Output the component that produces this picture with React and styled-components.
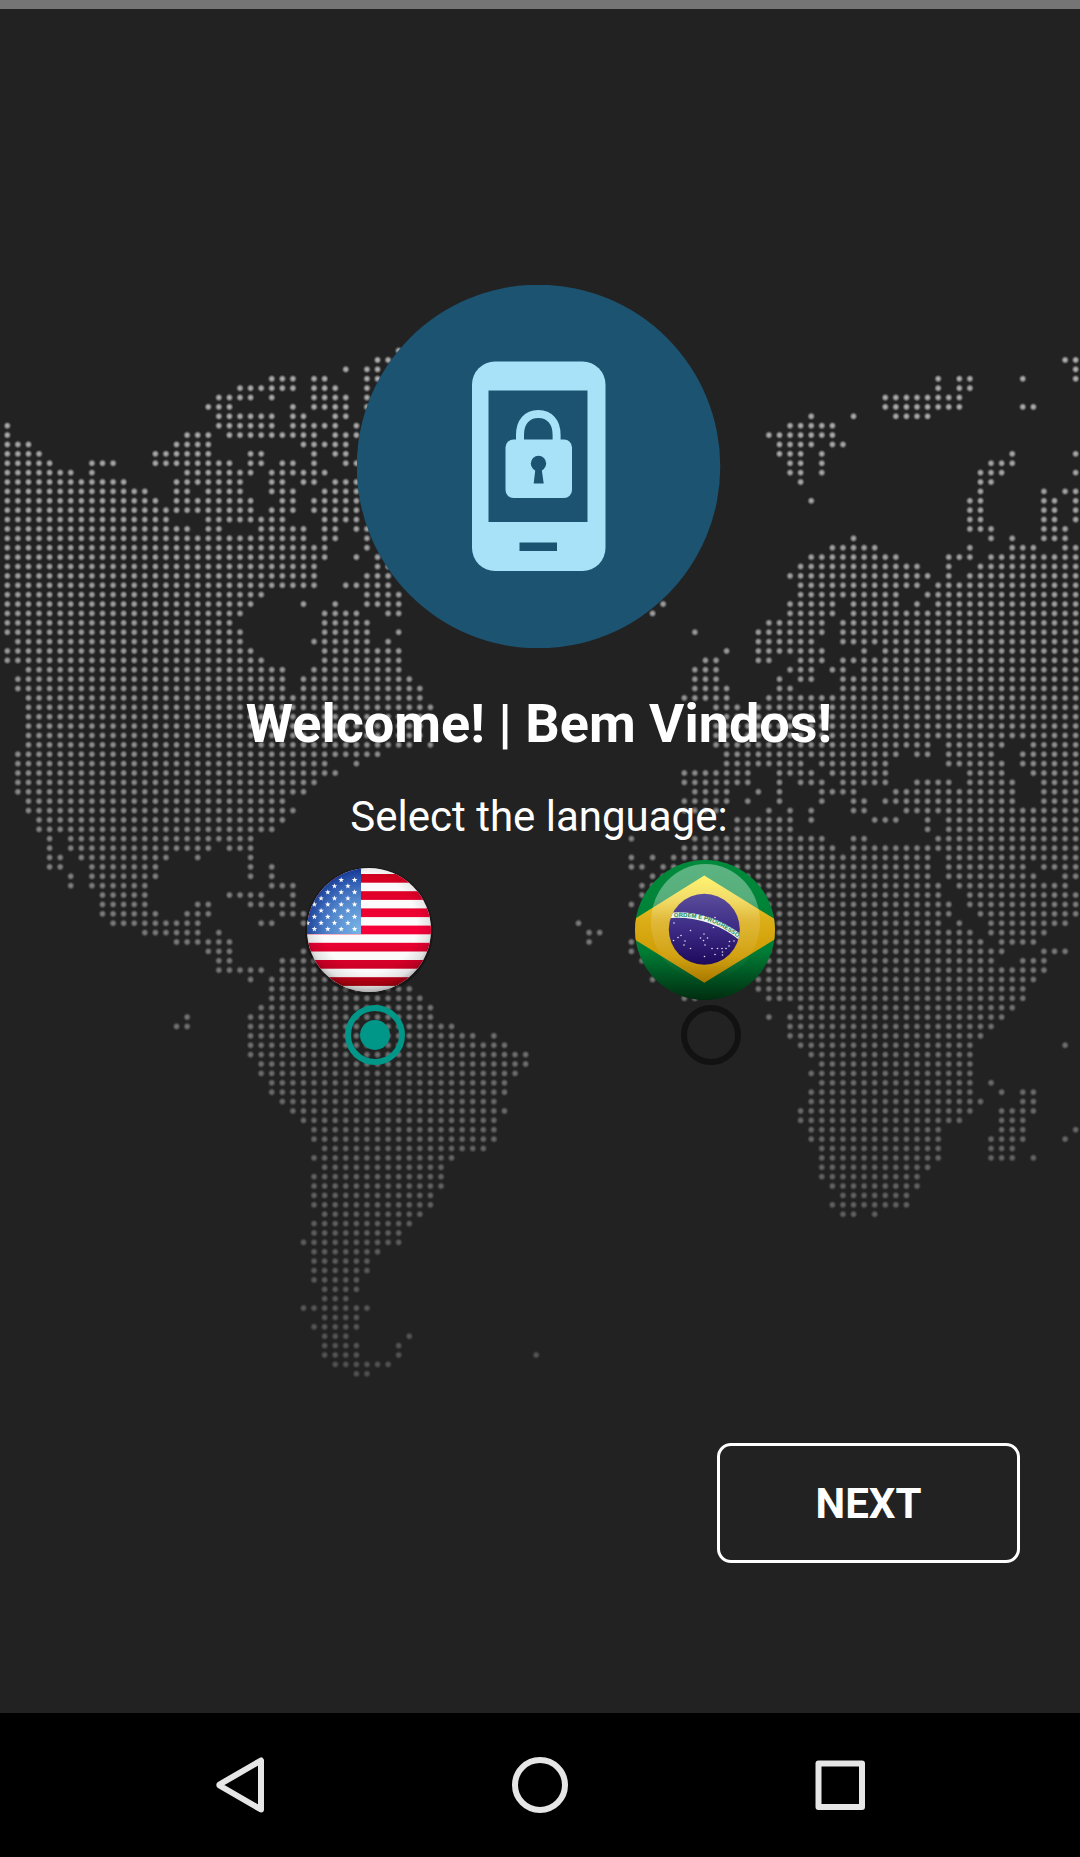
import React, { useState } from "react";
import styled, { createGlobalStyle } from "styled-components";

const GlobalStyle = createGlobalStyle`
  * { box-sizing: border-box; }
  body {
    margin: 0;
    background: #222222;
    color: #ffffff;
    font-family: Roboto, "Noto Sans", sans-serif;
  }
`;

const Screen = styled.div`
  position: relative;
  display: flex;
  flex-direction: column;
  min-height: 100vh;
  overflow: hidden;
  background: #222222;
`;

const StatusBar = styled.div`
  height: 9px;
  background: #757575;
`;

const MapBackdrop = styled.svg`
  position: absolute;
  top: 0;
  left: 0;
  width: 100%;
  height: auto;
`;

const Main = styled.main`
  position: relative;
  flex: 1;
  display: flex;
  flex-direction: column;
  align-items: center;
  padding: 276px 2px 0 0;
`;

const Emblem = styled.svg`
  display: block;
  width: 364px;
  height: 363px;
`;

const Title = styled.h1`
  margin: 44px 0 0;
  font-size: 54px;
  line-height: 64px;
  font-weight: 700;
  text-align: center;
`;

const Prompt = styled.p`
  margin: 36px 0 18px;
  font-size: 42px;
  line-height: 50px;
  text-align: center;
`;

const Languages = styled.div`
  display: flex;
  justify-content: center;
  gap: 196px;
  padding-right: 4px;
`;

const Language = styled.label`
  display: flex;
  flex-direction: column;
  align-items: center;
  gap: 5px;
  width: 140px;
  cursor: pointer;
`;

const FlagArt = styled.svg`
  display: block;
  width: 140px;
  height: 140px;
`;

const Radio = styled.input`
  appearance: none;
  display: grid;
  place-items: center;
  width: 60px;
  height: 60px;
  margin: 0 0 0 12px;
  border: 6px solid #121212;
  border-radius: 50%;

  &:checked { border-color: #009688; }
  &:checked::before {
    content: "";
    width: 30px;
    height: 30px;
    border-radius: 50%;
    background: #009688;
  }
`;

const Actions = styled.footer`
  position: relative;
  display: flex;
  justify-content: flex-end;
  padding: 0 60px 150px;
`;

const NextButton = styled.button`
  width: 303px;
  height: 120px;
  padding: 2px 0 0;
  border: 3px solid #ffffff;
  border-radius: 14px;
  background: transparent;
  color: #ffffff;
  font: 700 42px/50px Roboto, "Noto Sans", sans-serif;
  cursor: pointer;
`;

const NavBar = styled.nav`
  position: relative;
  display: flex;
  justify-content: center;
  gap: 156px;
  height: 144px;
  background: #000000;
`;

const NavButton = styled.button`
  width: 144px;
  height: 144px;
  padding: 0;
  border: 0;
  background: transparent;
  cursor: pointer;

  svg { display: block; fill: none; stroke: #e6e6e6; stroke-width: 6; stroke-linejoin: round; }
`;

/* Land cells of the dotted world map: one line for each row, as column ranges. */
const LAND = `37
35-36 100-101
32 34-35 101
25-27 29-30 34-35 88 90-91 96 101
22-27 29-31 34 88 90-91
20-23 25 29-32 34 83-90
19-21 27 29-32 34 83-90 96-97
20-25 27-28 31-32 76 80 84-87
0 20-25 27-31 33 74-78
0 17-19 21-29 31-33 72-78
0-2 16-19 28-32 73-76 78-79
0-3 14-19 23-24 29 31-32 73-75 77 95 101
0-4 8-10 14-21 23-24 26-27 29 32-33 74-75 77 93-95
0-6 8 17-23 25-30 74-75 77 92-94 101
0-11 16-22 25-26 28-29 31-33 75 92-93
0-13 16-17 19-22 25-27 30-33 92 98 100-101
0-14 16-23 26-27 29-33 76 91-92 98-99 101
0-23 25-27 29-33 91-92 98-99 101
0-15 19-26 30-33 91-92 98-99 101
0-17 19-20 24-28 30-31 33-34 91-93 98-100
0-28 30-31 34 80 93 95 98-100
0-30 34 78-82 91 95-97 100-101
0-30 33 35 76-84 89-91 93-101
0-29 35-36 75-86 89 92-101
0-29 34-36 74-87 89 91-101
0-29 32-36 75-86 88-101
0-24 34-37 75-84 87-101
0-23 28 31 34-37 62 74-78 80-84 86 88-101
0-22 30-33 36-37 61 74-78 80-101
0-21 30-34 72-77 79-101
0-22 30-34 37 65 71-77 79-101
1-22 29-34 36 71-76 79-101
0-23 30-37 68 71-77 81 83-101
0-24 30-37 66-67 71-72 75-77 79-101
2-26 29-37 65-67 74-76 78-79 81-101
1-26 28-38 65-67 73 75-76 79-101
1-26 28-39 65-68 73-74 79-101
2-39 64-68 72-101
2-40 67-69 71-101
2-39 67-101
2-39 67-101
2-39 67-101
2-38 40 67-87 89-94 97-101
1-35 68-84 86-87 89-93 96-101
1-30 33 68-75 77-83 89-94 96-101
1-31 64-70 73-76 78-83 91-94 97-101
1-29 64-70 73 75-77 79-83 86-89 91-95 98-101
1-28 65-68 71 73 77-80 84-95 98-101
2-26 64-68 70 73 77 80-81 83-95 98-101
2-27 64-67 72 74 76 80-81 85-101
3-26 69-74 76 82-84 87 89-101
3-25 69-74 87 89-101
4 6-23 59 65-77 80-81 88-101
4 6-19 21-23 64-78 80-101
4-5 7-15 18 23 59 61 63-87 89-101
4-5 8-14 23 25 59-60 62-87 89-96 98-101
6 8-14 23 25 61-87 89-97 100-101
6 8-13 25-27 60-88 90-100
9-13 21-24 27 60-88 91-101
9-13 18-19 23-27 59 61-89 91-101
9-14 17-19 26-28 62-89 92-101
10-18 24-25 28 54 62-88 90 93-100
13-18 20 55-56 62-91 93-98
16-21 55 59 62-92 94-97
19-21 28 59 62-94 98-100
20-21 26-36 60 62-93 96-98
20-24 26-37 62-98
23 25-37 61 71-97
25-38 71-96
25-39 64-65 72-96
24-40 75-95
17 23-40 72 74-94
16-17 23-42 74-93
23-44 46 74-92
23-47 75-91 100
23-49 76-91
24-49 77-91
24-48 76-91
25-47 77-91 93
25-47 76-91 94 96-97
26-46 76-92 96-97
27-47 75-91 94-97
28-46 75-90 94-96
29-46 76-88 94-96 101
29-46 76-88 93-96 100
30-45 77-88 93-95
29-42 77-88 93-95 97
30-41 77-87
29-41 77-86
29-41 78-86
29-40 79-85
29-40 78-85
30-39 79-80 82
29-38
29-37
28-37
29-35
29-34
29-34
29-33
30-33
30-32
28-34
30-33
29-33
30-32 38
30-33 37
30-33 37 50
31-36
33-34`;

const COL = 10.578;
const ROW = 9.387;
const MAP_LEFT = 2.01;
const MAP_TOP = 345.9;

const landPath = LAND.split("\n")
  .map((line, row) =>
    line
      .split(" ")
      .map((run) => {
        const [from, to = from] = run.split("-").map(Number);
        const x = (MAP_LEFT + from * COL).toFixed(2);
        const y = (MAP_TOP + row * ROW).toFixed(2);
        const w = ((to - from + 1) * COL).toFixed(2);
        return `M${x} ${y}h${w}v${ROW}h-${w}z`;
      })
      .join("")
  )
  .join("");

function WorldMap() {
  return (
    <MapBackdrop viewBox="0 0 1080 1400" aria-hidden="true">
      <defs>
        <radialGradient id="dot">
          <stop offset="0" stopColor="#fff" />
          <stop offset="0.35" stopColor="#fff" stopOpacity="0.9" />
          <stop offset="0.7" stopColor="#fff" stopOpacity="0.4" />
          <stop offset="1" stopColor="#fff" stopOpacity="0" />
        </radialGradient>
        <pattern id="dots" x={MAP_LEFT} y={MAP_TOP} width={COL} height={ROW} patternUnits="userSpaceOnUse">
          <circle cx={COL / 2} cy={ROW / 2} r="4.1" fill="url(#dot)" />
        </pattern>
        <mask id="grid" maskUnits="userSpaceOnUse" x="0" y="0" width="1080" height="1400">
          <rect width="1080" height="1400" fill="url(#dots)" />
        </mask>
        <linearGradient id="shade" gradientUnits="userSpaceOnUse" x1="0" y1="350" x2="0" y2="1380">
          <stop offset="0" stopColor="#b6b6b6" />
          <stop offset="0.25" stopColor="#a4a4a4" />
          <stop offset="0.5" stopColor="#868686" />
          <stop offset="0.75" stopColor="#6c6c6c" />
          <stop offset="1" stopColor="#545454" />
        </linearGradient>
      </defs>
      <path d={landPath} fill="url(#shade)" mask="url(#grid)" />
    </MapBackdrop>
  );
}

function PhoneLock() {
  return (
    <Emblem viewBox="0 0 364 363" aria-hidden="true">
      <circle cx="181.5" cy="181.5" r="181.8" fill="#1b5370" />
      <rect x="115" y="76.5" width="133.5" height="209.5" rx="23" fill="#a8e2f9" />
      <rect x="131.5" y="105.5" width="99" height="131.5" fill="#1b5370" />
      <rect x="162.5" y="257.5" width="37.5" height="8.5" fill="#1b5370" />
      <path d="M163 157v-7c0-13 7-21 18.300-21s18.300 8 18.300 21v7" fill="none" stroke="#a8e2f9" strokeWidth="8" />
      <rect x="148.500" y="154.500" width="66.500" height="58.500" rx="8" fill="#a8e2f9" />
      <circle cx="181.500" cy="178.500" r="7.700" fill="#1b5370" />
      <path d="M178.500 183h6l2.200 15.500h-10z" fill="#1b5370" />
    </Emblem>
  );
}

const starPoints = (cx, cy, r) =>
  Array.from({ length: 10 }, (_, k) => {
    const radius = k % 2 ? r * 0.42 : r;
    const angle = (Math.PI / 5) * k - Math.PI / 2;
    return `${(cx + radius * Math.cos(angle)).toFixed(2)},${(cy + radius * Math.sin(angle)).toFixed(2)}`;
  }).join(" ");

const stars = [];
for (let j = 0; j < 9; j += 1) {
  for (let i = -1; i < 7; i += 1) {
    if ((i + j) % 2 === 0) stars.push([15.4 + 6.7 * i, 20 + 6.13 * j]);
  }
}

function UsaFlag() {
  return (
    <FlagArt viewBox="0 0 140 140" aria-hidden="true">
      <defs>
        <clipPath id="usaRound"><circle cx="70" cy="70" r="62" /></clipPath>
        <linearGradient id="usaRed" x1="0" y1="0" x2="0" y2="140" gradientUnits="userSpaceOnUse">
          <stop offset="0.1" stopColor="#d3001f" />
          <stop offset="0.5" stopColor="#f8003a" />
          <stop offset="0.8" stopColor="#c90022" />
          <stop offset="0.95" stopColor="#a00000" />
        </linearGradient>
        <radialGradient id="usaBlue" cx="62" cy="70" r="62" gradientUnits="userSpaceOnUse">
          <stop offset="0" stopColor="#79b5e8" />
          <stop offset="0.5" stopColor="#5488cd" />
          <stop offset="1" stopColor="#153a9e" />
        </radialGradient>
        <radialGradient id="usaShade" cx="70" cy="64" r="68" gradientUnits="userSpaceOnUse">
          <stop offset="0.7" stopColor="#000" stopOpacity="0" />
          <stop offset="0.9" stopColor="#000" stopOpacity="0.1" />
          <stop offset="1" stopColor="#000" stopOpacity="0.3" />
        </radialGradient>
      </defs>
      <circle cx="70" cy="71" r="64" fill="#000" opacity="0.3" />
      <g clipPath="url(#usaRound)">
        <rect width="140" height="140" fill="#fbfbfb" />
        {[0, 1, 2, 3, 4, 5, 6].map((k) => (
          <rect key={k} x="0" y={14 + 17.2 * k} width="140" height="8.7" fill="url(#usaRed)" />
        ))}
        <rect width="62" height="74" fill="url(#usaBlue)" />
        {stars.map(([x, y]) => (
          <polygon key={`${x}/${y}`} points={starPoints(x, y, 2.9)} fill="#fff" />
        ))}
        <circle cx="70" cy="70" r="62" fill="url(#usaShade)" />
      </g>
    </FlagArt>
  );
}

const BRAZIL_STARS = [
  [39, 63], [55.500, 70.500], [43, 77.500], [46, 75.500], [50, 81], [49, 85], [55.500, 88.500], [38.500, 80.500],
  [69, 74], [72.500, 78], [65.500, 78], [68.500, 80.500], [70, 85], [80, 57.500], [78.500, 67.500], [77, 88.500],
  [82.500, 88.500], [87, 88.500], [91, 88.500], [94, 86], [94.500, 81.500], [99, 81], [87.500, 92], [87.500, 95], [80, 94.500], [69.500, 96.500],
];

function BrazilFlag() {
  return (
    <FlagArt viewBox="0 0 140 140" aria-hidden="true">
      <defs>
        <clipPath id="braRound"><circle cx="70" cy="70" r="70" /></clipPath>
        <clipPath id="braGlobe"><circle cx="69.3" cy="69.3" r="35.500" /></clipPath>
        <linearGradient id="braGreen" x1="0" y1="0" x2="0" y2="1">
          <stop offset="0" stopColor="#008a3b" />
          <stop offset="0.65" stopColor="#007d35" />
          <stop offset="1" stopColor="#002d10" />
        </linearGradient>
        <linearGradient id="braYellow" x1="0" y1="0" x2="0" y2="1">
          <stop offset="0" stopColor="#ffee22" />
          <stop offset="0.4" stopColor="#dcae18" />
          <stop offset="0.75" stopColor="#cf9c04" />
          <stop offset="1" stopColor="#a87800" />
        </linearGradient>
        <linearGradient id="braBlue" x1="0" y1="0" x2="0" y2="1">
          <stop offset="0" stopColor="#5b4d9c" />
          <stop offset="0.5" stopColor="#3c2a84" />
          <stop offset="1" stopColor="#1d0a5c" />
        </linearGradient>
        <linearGradient id="braGloss" x1="0" y1="0" x2="0" y2="1">
          <stop offset="0" stopColor="#fff" stopOpacity="0.36" />
          <stop offset="0.3" stopColor="#fff" stopOpacity="0.34" />
          <stop offset="0.5" stopColor="#fff" stopOpacity="0.14" />
          <stop offset="1" stopColor="#fff" stopOpacity="0" />
        </linearGradient>
        <path id="braMotto" d="M37 57.500Q74 53.500 105 79.500" />
      </defs>
      <g clipPath="url(#braRound)">
        <rect width="140" height="140" fill="url(#braGreen)" />
        <path d="M69.300 15.500L156 69.300L69.300 122.700L-17 69.300Z" fill="url(#braYellow)" />
        <ellipse cx="70.500" cy="62" rx="54.500" ry="58" fill="url(#braGloss)" />
        <circle cx="69.3" cy="69.3" r="35.500" fill="url(#braBlue)" />
        <g clipPath="url(#braGlobe)">
          <path d="M32 55.500Q73 51.500 107 78.500" fill="none" stroke="#eef4ee" strokeWidth="5.500" />
          <text fontFamily="Liberation Sans, sans-serif" fontSize="6" fontWeight="700" fill="#1d8a54">
            <textPath href="#braMotto" startOffset="2">ORDEM E PROGRESSO</textPath>
          </text>
        </g>
        {BRAZIL_STARS.map(([x, y]) => (
          <circle key={`${x}/${y}`} cx={x} cy={y} r="0.8" fill="#e4e0f4" />
        ))}
      </g>
    </FlagArt>
  );
}

export default function App() {
  const [language, setLanguage] = useState("en");
  return (
    <>
      <GlobalStyle />
      <Screen>
        <WorldMap />
        <StatusBar />
        <Main>
          <PhoneLock />
          <Title>Welcome! | Bem Vindos!</Title>
          <Prompt id="prompt">Select the language:</Prompt>
          <Languages role="radiogroup" aria-labelledby="prompt">
            <Language>
              <UsaFlag />
              <Radio type="radio" name="language" aria-label="English" checked={language === "en"} onChange={() => setLanguage("en")} />
            </Language>
            <Language>
              <BrazilFlag />
              <Radio type="radio" name="language" aria-label="Português" checked={language === "pt"} onChange={() => setLanguage("pt")} />
            </Language>
          </Languages>
        </Main>
        <Actions>
          <NextButton type="button">NEXT</NextButton>
        </Actions>
        <NavBar>
          <NavButton type="button" aria-label="Back">
            <svg width="144" height="144" viewBox="0 0 144 144"><path d="M93 47.500v49L51.500 72.500a1 1 0 0 1 0-1z" /></svg>
          </NavButton>
          <NavButton type="button" aria-label="Home">
            <svg width="144" height="144" viewBox="0 0 144 144"><circle cx="72" cy="72" r="25" /></svg>
          </NavButton>
          <NavButton type="button" aria-label="Recents">
            <svg width="144" height="144" viewBox="0 0 144 144"><rect x="50.500" y="50.500" width="43.500" height="43.500" /></svg>
          </NavButton>
        </NavBar>
      </Screen>
    </>
  );
}
